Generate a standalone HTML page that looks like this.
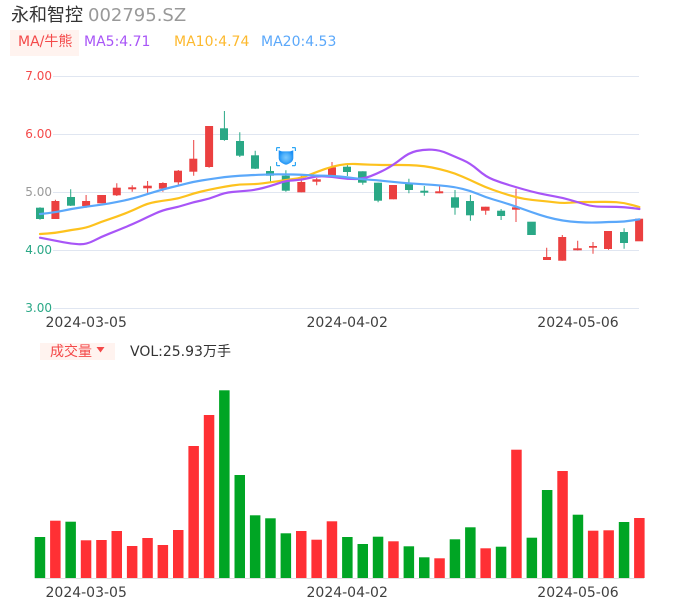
<!DOCTYPE html>
<html lang="zh">
<head>
<meta charset="utf-8">
<title>永和智控 002795.SZ</title>
<style>
html,body{margin:0;padding:0;background:#fff;width:686px;height:606px;overflow:hidden}
svg{display:block}
text{font-family:"DejaVu Sans","Noto Sans CJK SC",sans-serif}
</style>
</head>
<body>
<svg width="686" height="606" viewBox="0 0 686 606" xmlns="http://www.w3.org/2000/svg">
<defs>
<radialGradient id="sg" cx="50%" cy="50%" r="50%">
<stop offset="0" stop-color="#7cc8fc"/>
<stop offset="0.55" stop-color="#4fb0fa"/>
<stop offset="1" stop-color="#1b90f5"/>
</radialGradient>
</defs>
<rect width="686" height="606" fill="#fff"/>
<text x="11" y="21" font-size="18" fill="#333">永和智控</text>
<text x="88" y="21" font-size="18" fill="#999">002795.SZ</text>
<rect x="10" y="30" width="69" height="26" fill="#fff3ef"/>
<text x="18" y="46" font-size="14" fill="#f44949">MA/牛熊</text>
<text x="84" y="46" font-size="14" fill="#a855f7">MA5:4.71</text>
<text x="174" y="46" font-size="14" fill="#fdb92e">MA10:4.74</text>
<text x="261" y="46" font-size="14" fill="#5ba8fa">MA20:4.53</text>

<path d="M53 76.5H639M53 134.5H639M53 192.5H639M53 250.5H639M53 308.5H639" stroke="#e0e6f1" stroke-width="1" fill="none"/>
<g font-size="12" text-anchor="end">
<text x="52" y="80" fill="#f44949">7.00</text>
<text x="52" y="138" fill="#f44949">6.00</text>
<text x="52" y="196" fill="#999">5.00</text>
<text x="52" y="254" fill="#2aa886">4.00</text>
<text x="52" y="312" fill="#2aa886">3.00</text>
</g>

<!-- wicks -->
<path fill="none" stroke="#eb4040" stroke-width="1" d="M55.4 199.7V219M86.1 195V207.7M116.8 183.3V196M132.2 185.3V191.7M147.6 181V192.7M162.9 182.3V191.7M178.3 170V184.7M193.7 140V175.7M209.1 126V167.7M301.3 175.7V192.3M316.7 178V185.3M332 162V176.7M393.5 185V199.3M439.6 186V193.3M485.7 206.7V214.7M516 188.7V222M546.7 247.7V260M562.3 235V260.7M577.7 240.7V250.5M593 242V253.7M608.5 231V249.7"/>
<path fill="none" stroke="#2aa886" stroke-width="1" d="M40 207.3V219.7M70.7 189.3V206M224.4 111V140.7M239.8 132.3V157M255.2 150.7V169M270.5 166.3V181.7M285.9 170.3V191.7M347.4 163.3V176M362.8 171.3V184.7M378.1 182.7V202.3M408.9 178.7V193.3M424.3 186V195.7M455 190V214.7M470.4 195V220.7M501.1 209V220M624.1 228.3V248.7"/>
<!-- candle bodies: red -->
<g fill="#eb4040">
<rect x="51.4" y="201" width="8" height="18"/>
<rect x="82.1" y="201" width="8" height="5"/>
<rect x="97.2" y="195" width="8.8" height="8.3"/>
<rect x="112.8" y="187.7" width="8" height="7.6"/>
<rect x="128.2" y="187.3" width="8" height="2"/>
<rect x="143.2" y="185.7" width="8.6" height="2.6"/>
<rect x="158.9" y="183" width="8" height="5.7"/>
<rect x="174" y="170.7" width="8" height="11.6"/>
<rect x="189.3" y="158.7" width="8" height="13"/>
<rect x="205.1" y="126" width="8" height="41"/>
<rect x="297.3" y="182" width="8" height="10.3"/>
<rect x="312.4" y="179.3" width="8.4" height="2.4"/>
<rect x="328" y="167.3" width="8" height="8.7"/>
<rect x="389" y="185" width="8" height="14.3"/>
<rect x="435.2" y="191.3" width="8" height="2"/>
<rect x="481" y="206.7" width="8.6" height="4"/>
<rect x="512" y="207.3" width="8" height="2.4"/>
<rect x="543" y="257" width="8" height="3"/>
<rect x="558.2" y="237" width="8" height="23.7"/>
<rect x="573.2" y="248.3" width="8.6" height="2"/>
<rect x="589" y="246" width="8" height="1.7"/>
<rect x="604" y="231" width="8" height="18"/>
<rect x="635.1" y="218.7" width="8" height="22.6"/>
</g>
<!-- candle bodies: green -->
<g fill="#2aa886">
<rect x="36" y="207.7" width="8" height="11.3"/>
<rect x="67" y="197" width="8" height="8.7"/>
<rect x="220" y="128.3" width="8" height="11.7"/>
<rect x="236" y="141" width="8" height="14.7"/>
<rect x="251" y="155.3" width="8" height="13.4"/>
<rect x="266" y="171" width="8" height="4.7"/>
<rect x="281.8" y="175.7" width="8" height="15"/>
<rect x="343" y="166.7" width="8" height="5.3"/>
<rect x="358" y="171.3" width="8.6" height="11.4"/>
<rect x="374" y="182.7" width="8" height="18"/>
<rect x="405" y="184" width="8" height="6"/>
<rect x="420.3" y="190.7" width="8" height="2"/>
<rect x="451" y="197.3" width="8" height="10.4"/>
<rect x="466" y="201" width="8" height="14.3"/>
<rect x="497.1" y="210.7" width="8" height="5.3"/>
<rect x="527.2" y="221.7" width="8.6" height="13.3"/>
<rect x="620" y="232" width="8" height="11"/>
</g>

<!-- moving averages -->
<g fill="none" stroke-width="2.2" stroke-linejoin="round" stroke-linecap="round">
<path stroke="#fdc21e" d="M40 234L47.7 233.5Q55.4 233 63.1 231.5Q70.7 230 78.4 229Q86.1 228 93.8 224.9Q101.5 221.7 109.2 219.2Q116.8 216.7 124.5 213.7Q132.2 210.7 139.9 207Q147.6 203.3 155.3 202Q162.9 200.7 170.6 199.7Q178.3 198.7 186 196Q193.7 193.3 201.4 191.5Q209.1 189.7 216.8 188.2Q224.4 186.7 232.1 185.5Q239.8 184.3 247.5 184.3Q255.2 184.3 262.9 183.3Q270.5 182.3 278.2 181.2Q285.9 180 293.6 179Q301.3 178 309 175Q316.7 172 324.4 169.2Q332 166.5 339.7 165.1Q347.4 163.7 355.1 164Q362.8 164.3 370.5 164.7Q378.1 165 385.8 165Q393.5 165 401.2 165Q408.9 165 416.6 165.5Q424.3 166 432 167.5Q439.6 169 447.3 171.2Q455 173.3 462.7 176.7Q470.4 180 478.1 183.7Q485.7 187.3 493.4 190Q501.1 192.7 508.8 195.1Q516.5 197.5 524.2 198.8Q531.9 200 539.6 200.7Q547.2 201.3 554.9 202.3Q562.6 203.3 570.3 202.7Q578 202 585.7 202Q593.3 202 601 201.9Q608.7 201.7 616.4 202.2Q624.1 202.7 631.8 204.9L639.4 207"/>
<path stroke="#a855f7" d="M40 237.7L47.7 239.2Q55.4 240.7 63.1 242.2Q70.7 243.7 78.4 244.2Q86.1 244.7 93.8 240.7Q101.5 236.7 109.2 233.7Q116.8 230.7 124.5 227.5Q132.2 224.3 139.9 220.7Q147.6 217 155.3 213.5Q162.9 210 170.6 208.5Q178.3 207 186 204.5Q193.7 202 201.4 200.5Q209.1 199 216.8 195.9Q224.4 192.7 232.1 192Q239.8 191.3 247.5 190.7Q255.2 190 262.9 188Q270.5 186 278.2 183.4Q285.9 180.7 293.6 180.4Q301.3 180 309 178Q316.7 176 324.4 176.4Q332 176.7 339.7 177.9Q347.4 179 355.1 179Q362.8 179 370.5 176.2Q378.1 173.3 385.8 169.2Q393.5 165 401.2 158.9Q408.9 152.7 416.6 151Q424.3 149.3 432 149.7Q439.6 150 447.3 153.4Q455 156.7 462.7 160Q470.4 163.3 478.1 170Q485.7 176.7 493.4 179.7Q501.1 182.7 508.8 185Q516.5 187.3 524.2 189.5Q531.9 191.7 539.6 193.4Q547.2 195 554.9 196.4Q562.6 197.7 570.3 200Q578 202.3 585.7 204.5Q593.3 206.7 601 206.7Q608.7 206.7 616.4 206.9Q624.1 207 631.8 208L639.4 209"/>
<path stroke="#5ba8fa" d="M40 214L47.7 213.2Q55.4 212.3 63.1 210.7Q70.7 209 78.4 207.9Q86.1 206.7 93.8 205.7Q101.5 204.7 109.2 203.4Q116.8 202 124.5 200.4Q132.2 198.7 139.9 196.4Q147.6 194 155.3 191.7Q162.9 189.3 170.6 187.5Q178.3 185.7 186 183.7Q193.7 181.7 201.4 180.5Q209.1 179.3 216.8 178.2Q224.4 177 232.1 176.4Q239.8 175.7 247.5 175.4Q255.2 175 262.9 174.7Q270.5 174.3 278.2 174.3Q285.9 174.3 293.6 174.5Q301.3 174.7 309 175.2Q316.7 175.7 324.4 175.7Q332 175.7 339.7 176.5Q347.4 177.3 355.1 178.3Q362.8 179.3 370.5 179.8Q378.1 180.3 385.8 181.2Q393.5 182 401.2 182.7Q408.9 183.3 416.6 183.8Q424.3 184.3 432 184.8Q439.6 185.3 447.3 186.2Q455 187 462.7 188.9Q470.4 190.7 478.1 194Q485.7 197.3 493.4 199.5Q501.1 201.7 508.8 204.2Q516.5 206.7 524.2 209.5Q531.9 212.3 539.6 214.8Q547.2 217.3 554.9 219Q562.6 220.7 570.3 221.5Q578 222.3 585.7 222.5Q593.3 222.7 601 222.4Q608.7 222 616.4 221.9Q624.1 221.7 631.8 220.5L639.4 219.3"/>
</g>

<!-- marker icon -->
<g>
<path fill="none" stroke="#2ea7f5" stroke-width="1.2" d="M276.6 151V148.2Q276.6 147.6 277.2 147.6H280M292 147.6H294.8Q295.4 147.6 295.4 148.2V151M295.4 162V165Q295.4 165.6 294.8 165.6H292M280 165.6H277.2Q276.6 165.6 276.6 165V162"/>
<path fill="url(#sg)" d="M278.7 150.3L281.8 151.4H290.2L293.3 150.3V158Q293.3 162.6 286 164.8Q278.7 162.6 278.7 158Z"/>
</g>

<g font-size="14" fill="#3f3f3f">
<text x="45.5" y="327">2024-03-05</text>
<text x="306.5" y="327">2024-04-02</text>
<text x="537.3" y="327">2024-05-06</text>
</g>

<rect x="40" y="343" width="75" height="17" fill="#fff3ef"/>
<text x="50" y="356" font-size="14" fill="#f44949">成交量</text>
<path d="M96.5 347H104.5L100.5 352.5Z" fill="#f44949"/>
<text x="130" y="356" font-size="14" fill="#333">VOL:25.93万手</text>

<!-- volume bars -->
<path d="M34.7 578.5H644" stroke="#e0e0e0" stroke-width="1" fill="none"/>
<g fill="#ff3034">
<rect x="50.1" y="520.7" width="10.5" height="57.3"/>
<rect x="80.8" y="540.3" width="10.5" height="37.7"/>
<rect x="96.2" y="540" width="10.5" height="38"/>
<rect x="111.5" y="531" width="10.5" height="47"/>
<rect x="126.9" y="546" width="10.5" height="32"/>
<rect x="142.3" y="538" width="10.5" height="40"/>
<rect x="157.6" y="545" width="10.5" height="33"/>
<rect x="173" y="530" width="10.5" height="48"/>
<rect x="188.4" y="446" width="10.5" height="132"/>
<rect x="203.8" y="415" width="10.5" height="163"/>
<rect x="296" y="531" width="10.5" height="47"/>
<rect x="311.4" y="539.7" width="10.5" height="38.3"/>
<rect x="326.7" y="521.3" width="10.5" height="56.7"/>
<rect x="388.2" y="541.3" width="10.5" height="36.7"/>
<rect x="434.3" y="558.3" width="10.5" height="19.7"/>
<rect x="480.4" y="548.3" width="10.5" height="29.7"/>
<rect x="511.2" y="449.7" width="10.5" height="128.3"/>
<rect x="557.3" y="471" width="10.5" height="107"/>
<rect x="587.9" y="530.7" width="10.5" height="47.3"/>
<rect x="603.4" y="530.3" width="10.5" height="47.7"/>
<rect x="634.1" y="518" width="10.5" height="60"/>
</g>
<g fill="#00a524">
<rect x="34.7" y="537" width="10.5" height="41"/>
<rect x="65.4" y="521.7" width="10.5" height="56.3"/>
<rect x="219.1" y="390.3" width="10.5" height="187.7"/>
<rect x="234.5" y="475" width="10.5" height="103"/>
<rect x="249.9" y="515.3" width="10.5" height="62.7"/>
<rect x="265.2" y="518.3" width="10.5" height="59.7"/>
<rect x="280.6" y="533.3" width="10.5" height="44.7"/>
<rect x="342.1" y="537" width="10.5" height="41"/>
<rect x="357.5" y="544" width="10.5" height="34"/>
<rect x="372.8" y="536.7" width="10.5" height="41.3"/>
<rect x="403.6" y="546.3" width="10.5" height="31.7"/>
<rect x="419" y="557.3" width="10.5" height="20.7"/>
<rect x="449.7" y="539.3" width="10.5" height="38.7"/>
<rect x="465.1" y="527.3" width="10.5" height="50.7"/>
<rect x="495.8" y="546.7" width="10.5" height="31.3"/>
<rect x="526.6" y="537.7" width="10.5" height="40.3"/>
<rect x="541.9" y="490" width="10.5" height="88"/>
<rect x="572.7" y="514.7" width="10.5" height="63.3"/>
<rect x="618.8" y="522" width="10.5" height="56"/>
</g>

<g font-size="14" fill="#3f3f3f">
<text x="45.5" y="597">2024-03-05</text>
<text x="306.5" y="597">2024-04-02</text>
<text x="537.3" y="597">2024-05-06</text>
</g>
</svg>
</body>
</html>
